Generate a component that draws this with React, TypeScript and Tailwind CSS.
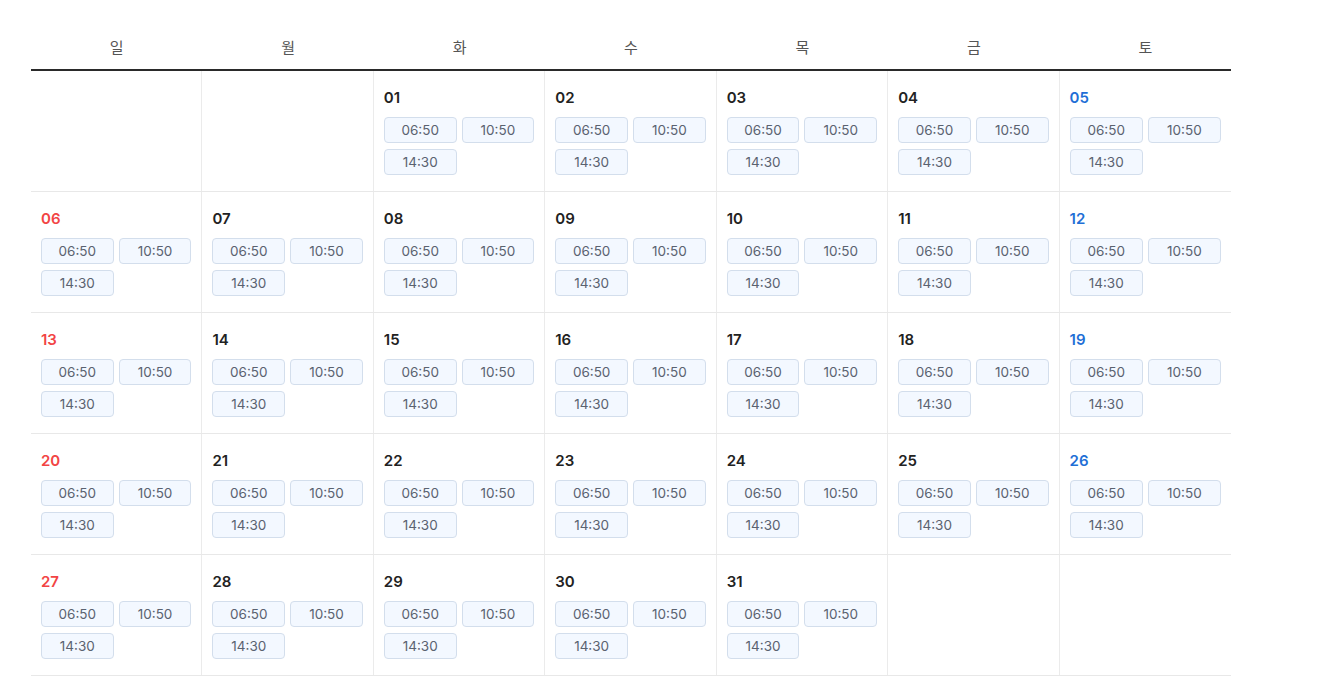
import React from "react";

const days = ["일", "월", "화", "수", "목", "금", "토"];
const times = ["06:50", "10:50", "14:30"];

export default function App() {
  const cells: (number | null)[] = [null, null];
  for (let d = 1; d <= 31; d++) cells.push(d);
  while (cells.length < 35) cells.push(null);
  const rows: (number | null)[][] = [];
  for (let i = 0; i < cells.length; i += 7) rows.push(cells.slice(i, i + 7));

  return (
    <div
      className="min-h-screen bg-white pt-[25px] pl-[31px]"
      style={{ fontFamily: "Inter, 'Noto Sans CJK KR', sans-serif" }}
    >
      <div className="w-[1200px]">
        <div className="grid grid-cols-7 h-[46px] border-b-2 border-[#2a2a2a]">
          {days.map((d) => (
            <div
              key={d}
              className="flex items-center justify-center text-[15px] text-[#555] pt-[2px]"
            >
              {d}
            </div>
          ))}
        </div>
        {rows.map((row, ri) => (
          <div key={ri} className="grid grid-cols-7 border-b border-[#e8e8e8]">
            {row.map((d, ci) => (
              <div
                key={ci}
                className={`h-[120px] px-[10px] pt-[17px] ${
                  ci < 6 ? "border-r border-[#ebebeb]" : ""
                }`}
              >
                {d !== null && (
                  <>
                    <div
                      className={`h-[20px] leading-[20px] text-[15px] font-semibold ${
                        ci === 0
                          ? "text-[#f24444]"
                          : ci === 6
                          ? "text-[#1f6fd6]"
                          : "text-[#222]"
                      }`}
                    >
                      {String(d).padStart(2, "0")}
                    </div>
                    <div className="mt-[9px] grid grid-cols-2 gap-x-[5px] gap-y-[6px]">
                      {times.map((t) => (
                        <div
                          key={t}
                          className="h-[26px] flex items-center justify-center rounded-[4px] border border-[#d3deec] bg-[#f3f8ff] text-[13.5px] text-[#5a6270]"
                        >
                          {t}
                        </div>
                      ))}
                    </div>
                  </>
                )}
              </div>
            ))}
          </div>
        ))}
      </div>
    </div>
  );
}
